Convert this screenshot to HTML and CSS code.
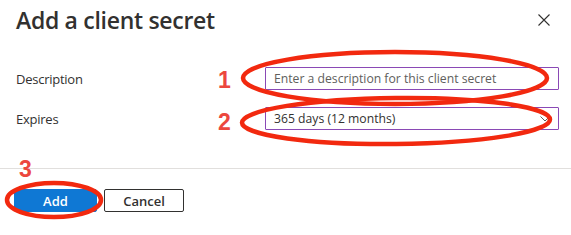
FILE: index.html
```html
<!DOCTYPE html>
<html lang="en">

<head>
    <meta charset="UTF-8">
    <meta name="viewport" content="width=device-width, initial-scale=1.0">
    <link rel="stylesheet" href="styles.css">
    <title>Add a client secret</title>
</head>

<body>
    <div class="dialog">
        <div class="header">
            <h2 class="title">Add a client secret</h2>
            <button class="close" aria-label="Close">
                <svg width="12" height="12" viewBox="0 0 12 12">
                    <path d="M0.5 0.5 L11.5 11.5 M11.5 0.5 L0.5 11.5" stroke="#323130" stroke-width="1.1" fill="none" />
                </svg>
            </button>
        </div>

        <div class="form">
            <label class="label" for="desc">Description</label>
            <input class="field" id="desc" type="text" placeholder="Enter a description for this client secret">

            <label class="label" for="expires">Expires</label>
            <div class="field select" id="expires">
                <span>365 days (12 months)</span>
                <svg width="10" height="6" viewBox="0 0 10 6">
                    <path d="M0.5 0.5 L5 5 L9.5 0.5" stroke="#605e5c" stroke-width="1" fill="none" />
                </svg>
            </div>
        </div>

        <div class="footer">
            <button class="btn primary">Add</button>
            <button class="btn">Cancel</button>
        </div>

        <!-- red markup drawn over the dialog -->
        <svg class="marks" width="571" height="235" viewBox="0 0 571 235">
            <g fill="none" stroke="#f2290f" stroke-width="4.5">
                <ellipse cx="395" cy="78" rx="152" ry="26" />
                <ellipse cx="396" cy="121" rx="154" ry="23" transform="rotate(-0.6 396 121)" />
                <ellipse cx="54" cy="200" rx="47" ry="17" />
            </g>
            <g class="num" fill="#ec473e">
                <text x="218" y="88">1</text>
                <text x="218" y="130">2</text>
                <text x="19" y="177">3</text>
            </g>
        </svg>
    </div>
</body>

</html>
```

FILE: styles.css
```css
* {
    margin: 0;
    padding: 0;
    box-sizing: border-box;
}

body {
    font-family: "Open Sans", "Noto Sans", sans-serif;
    color: #323130;
    background: #fff;
}

.dialog {
    position: relative;
    width: 571px;
    height: 235px;
}

.header {
    display: flex;
    justify-content: space-between;
    align-items: flex-start;
    padding: 3px 21px 0 16px;
}

.title {
    font-size: 23px;
    font-weight: 600;
    letter-spacing: -0.3px;
    color: #323130;
    line-height: 34px;
}

.close {
    border: none;
    background: none;
    margin-top: 11px;
    display: flex;
}

.form {
    display: grid;
    grid-template-columns: 249px 294px;
    row-gap: 17px;
    align-items: center;
    padding: 30px 0 0 16px;
}

.label {
    font-size: 13px;
    letter-spacing: -0.25px;
    color: #323130;
}

.field {
    height: 23px;
    border: 1px solid #8a49b5;
    border-radius: 1px;
    font-family: inherit;
    font-size: 12.2px;
    padding: 0 8px;
    color: #323130;
    outline: none;
}

.field::placeholder {
    color: #605e5c;
}

.select {
    display: flex;
    align-items: center;
    justify-content: space-between;
}

.footer {
    margin-top: 38px;
    border-top: 1px solid #e1dfdd;
    padding: 20px 0 0 14px;
    display: flex;
    gap: 7px;
}

.btn {
    height: 23px;
    width: 80px;
    border: 1px solid #323130;
    border-radius: 2px;
    background: #fff;
    font-family: inherit;
    font-size: 13px;
    font-weight: 600;
    color: #323130;
}

.btn.primary {
    width: 83px;
    background: #0f78d4;
    border-color: #0f78d4;
    color: #fff;
}

.marks {
    position: absolute;
    top: 0;
    left: 0;
    pointer-events: none;
}

.num text {
    font-family: "Liberation Sans", sans-serif;
    font-weight: bold;
    font-size: 23px;
}
```
